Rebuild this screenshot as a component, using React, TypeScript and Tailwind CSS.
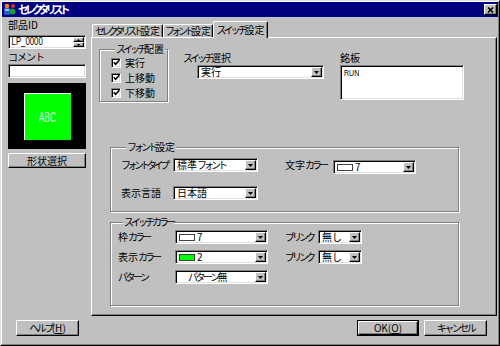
import React from "react";

const raised =
  "border border-t-white border-l-white border-r-black border-b-black shadow-[inset_-1px_-1px_0_#808080] bg-[#c0c0c0]";
const sunken =
  "border border-t-[#808080] border-l-[#808080] border-r-white border-b-white shadow-[inset_1px_1px_0_#000,inset_-1px_-1px_0_#dfdfdf]";
const group =
  "min-w-0 border border-[#808080] shadow-[inset_1px_1px_0_#fff,1px_1px_0_#fff]";
const legend = "bg-[#c0c0c0] px-px text-[10px] leading-[12px] whitespace-nowrap";
const label = "text-[10px] leading-[12px] whitespace-nowrap";

const J = ({ t, k = "tracking-[-3px]" }: { t: string; k?: string }) => (
  <>
    {t.split(/([\u30A0-\u30FF]+)/).map((s, i) =>
      /[\u30A0-\u30FF]/.test(s) ? (
        <span key={i} className={k}>
          {s}
        </span>
      ) : (
        s
      )
    )}
  </>
);

const Arrow = () => (
  <div className={`flex w-[11px] shrink-0 items-center justify-center ${raised}`}>
    <svg width="5" height="3" viewBox="0 0 5 3">
      <path d="M0 0h5L2.5 3z" fill="#000" />
    </svg>
  </div>
);

const Drop = ({ className = "", children }: { className?: string; children?: React.ReactNode }) => (
  <div className={`flex h-[14px] bg-white p-px ${sunken} ${className}`}>
    <div className="flex min-w-0 flex-1 items-center gap-[2px] whitespace-nowrap pl-[2px] text-[10px] leading-[10px]">
      {children}
    </div>
    <Arrow />
  </div>
);

const Swatch = ({ color }: { color: string }) => (
  <span className={`h-[7px] w-[16px] shrink-0 border border-[#404040] ${color}`} />
);

const Check = ({ text }: { text: string }) => (
  <div className="flex h-[15px] items-center gap-[4px]">
    <span className={`flex h-[10px] w-[10px] items-center justify-center bg-white ${sunken}`}>
      <svg width="7" height="7" viewBox="0 0 7 7">
        <path d="M0.8 3.2L2.6 5.2L6.3 1.2" stroke="#000" strokeWidth="1.6" fill="none" />
      </svg>
    </span>
    <span className={label}>{text}</span>
  </div>
);

const Tab = ({ className = "", children }: { className?: string; children: React.ReactNode }) => (
  <div
    className={`flex items-center justify-center rounded-t-[2px] border-t border-l border-r border-t-white border-l-white border-r-black shadow-[inset_-1px_0_0_#808080] bg-[#c0c0c0] text-[10px] leading-[10px] whitespace-nowrap ${className}`}
  >
    {children}
  </div>
);

const Btn = ({ className = "", children }: { className?: string; children: React.ReactNode }) => (
  <div className={`flex items-center justify-center text-[10px] leading-[10px] ${raised} ${className}`}>
    <span>{children}</span>
  </div>
);

export default function App() {
  return (
    <div className="h-[346px] w-[500px] overflow-hidden border border-t-[#dfdfdf] border-l-[#dfdfdf] border-r-black border-b-black bg-[#c0c0c0] font-['Noto_Sans_CJK_JP','Noto_Sans',sans-serif] text-black">
      <div className="flex h-full flex-col border border-t-white border-l-white border-r-[#808080] border-b-[#808080]">
        {/* title bar */}
        <div className="flex h-[15px] shrink-0 items-center bg-[#000080] pl-px">
          <svg width="13" height="13" viewBox="0 0 13 13">
            <rect x="1" y="5" width="6" height="7" fill="#2858c8" />
            <rect x="2" y="6" width="4" height="2" fill="#a0c0ff" />
            <circle cx="9.5" cy="8.5" r="3" fill="#18a040" />
            <circle cx="4" cy="3" r="2.3" fill="#f08818" />
            <circle cx="10" cy="3" r="2" fill="#e02828" />
          </svg>
          <span className="ml-[2px] text-[11px] font-bold leading-[11px] text-white">
            <J t="セレクタリスト" k="tracking-[-4px]" />
          </span>
          <div className={`ml-auto mr-[1px] flex h-[11px] w-[13px] items-center justify-center ${raised}`}>
            <svg width="7" height="6" viewBox="0 0 7 6">
              <path d="M1 0.5L6 5.5M6 0.5L1 5.5" stroke="#000" strokeWidth="1.6" />
            </svg>
          </div>
        </div>

        <div className="flex">
          {/* left column */}
          <div className="ml-[6px] flex w-[78px] flex-col">
            <span className={`mt-[2px] ${label}`}>部品ID</span>
            <div className={`mt-[4px] flex h-[14px] bg-white p-px ${sunken}`}>
              <span className="flex-1 origin-left scale-x-[0.78] pl-[2px] font-['Liberation_Sans',sans-serif] text-[10px] leading-[10px]">
                LP_0000
              </span>
              <div className="flex w-[11px] flex-col">
                <div className={`flex h-[5px] items-center justify-center ${raised}`}>
                  <svg width="3" height="2" viewBox="0 0 3 2">
                    <path d="M0 2h3L1.5 0z" fill="#000" />
                  </svg>
                </div>
                <div className={`flex h-[5px] items-center justify-center ${raised}`}>
                  <svg width="3" height="2" viewBox="0 0 3 2">
                    <path d="M0 0h3L1.5 2z" fill="#000" />
                  </svg>
                </div>
              </div>
            </div>
            <span className={`mt-[2px] ${label}`}>
              <J t="コメント" k="tracking-[-1px]" />
            </span>
            <div className={`mt-px h-[14px] bg-white ${sunken}`} />
            <div className="mt-[5px] flex h-[66px] items-center justify-center bg-black">
              <div className="flex h-[47px] w-[47px] items-center justify-center border-t border-l border-white bg-[#00ff00]">
                <span className="scale-x-[0.6] font-['Liberation_Sans',sans-serif] text-[14px] leading-[14px] text-[#d8ffd8]">
                  ABC
                </span>
              </div>
            </div>
            <Btn className="mt-[4px] h-[15px]">形状選択</Btn>
          </div>

          {/* tab control */}
          <div className="ml-[5px] mt-[4px] flex w-[406px] flex-col">
            <div className="flex h-[16px] items-end pl-px">
              <Tab className="h-[13px] w-[71px]">
                <J t="セレクタリスト設定" k="tracking-[-3.5px]" />
              </Tab>
              <Tab className="h-[13px] w-[50px]">
                <J t="フォント設定" k="tracking-[-3.5px]" />
              </Tab>
              <Tab className="relative z-10 -mb-px h-[17px] w-[55px]">
                <J t="スイッチ設定" k="tracking-[-3px]" />
              </Tab>
            </div>
            <div className="h-[279px] border border-t-white border-l-white border-r-black border-b-black shadow-[inset_-1px_-1px_0_#808080]">
              {/* row 1 */}
              <div className="flex items-start">
                <fieldset className={`ml-[7px] mt-[5px] w-[69px] shrink-0 pb-px pl-[11px] ${group}`}>
                  <legend className={`ml-[4px] ${legend}`}>
                    <J t="スイッチ配置" />
                  </legend>
                  <Check text="実行" />
                  <Check text="上移動" />
                  <Check text="下移動" />
                </fieldset>
                <div className="ml-[15px] mt-[14px] flex w-[141px] flex-col">
                  <span className={label}>
                    <J t="スイッチ選択" />
                  </span>
                  <Drop className="ml-[14px] mt-px w-[127px]">実行</Drop>
                </div>
                <div className="ml-[16px] mt-[14px] flex flex-col">
                  <span className={label}>銘板</span>
                  <div className={`mt-px h-[35px] w-[124px] bg-white pl-[3px] pt-[2px] ${sunken}`}>
                    <span className="block origin-left scale-x-[0.78] font-['Liberation_Sans',sans-serif] text-[9px] leading-[10px]">
                      RUN
                    </span>
                  </div>
                </div>
              </div>

              {/* font settings */}
              <fieldset className={`ml-[18px] mt-[39px] w-[349px] pb-[11px] pl-[10px] pt-[5px] ${group}`}>
                <legend className={`ml-[5px] ${legend}`}>
                  <J t="フォント設定" />
                </legend>
                <div className="flex items-start">
                  <span className={`mt-px w-[52px] ${label}`}>
                    <J t="フォントタイプ" k="tracking-[-3.5px]" />
                  </span>
                  <Drop className="w-[85px]">
                    <span>
                      標準<J t="フォント" />
                    </span>
                  </Drop>
                  <span className={`ml-[27px] mt-px w-[48px] ${label}`}>
                    <J t="文字カラー" />
                  </span>
                  <Drop className="mt-[2px] h-[13px] w-[83px]">
                    <Swatch color="bg-white" />
                    <span>7</span>
                  </Drop>
                </div>
                <div className="mt-[12px] flex items-start">
                  <span className={`mt-px w-[52px] ${label}`}>表示言語</span>
                  <Drop className="w-[85px]">日本語</Drop>
                </div>
              </fieldset>

              {/* switch colours */}
              <fieldset className={`ml-[18px] mt-[4px] w-[349px] pb-[21px] pl-[7px] pt-[2px] ${group}`}>
                <legend className={`ml-[5px] ${legend}`}>
                  <J t="スイッチカラー" />
                </legend>
                <div className="flex flex-col gap-[6px]">
                  <div className="flex items-center">
                    <span className={`w-[57px] ${label}`}>
                      <J t="枠カラー" />
                    </span>
                    <Drop className="w-[93px]">
                      <Swatch color="bg-white" />
                      <span>7</span>
                    </Drop>
                    <span className={`ml-[17px] w-[33px] ${label}`}>
                      <J t="ブリンク" />
                    </span>
                    <Drop className="w-[44px]">無し</Drop>
                  </div>
                  <div className="flex items-center">
                    <span className={`w-[57px] ${label}`}>
                      <J t="表示カラー" />
                    </span>
                    <Drop className="w-[93px]">
                      <Swatch color="bg-[#00ff00]" />
                      <span>2</span>
                    </Drop>
                    <span className={`ml-[17px] w-[33px] ${label}`}>
                      <J t="ブリンク" />
                    </span>
                    <Drop className="w-[44px]">無し</Drop>
                  </div>
                  <div className="flex items-center">
                    <span className={`w-[57px] ${label}`}>
                      <J t="パターン" k="tracking-[-2.5px]" />
                    </span>
                    <Drop className="w-[93px]">
                      <span className="pl-[9px]">
                        <J t="パターン無" k="tracking-[-2.5px]" />
                      </span>
                    </Drop>
                  </div>
                </div>
              </fieldset>
            </div>
          </div>
        </div>

        {/* bottom buttons */}
        <div className="mt-[4px] flex pl-[14px] pr-[11px]">
          <Btn className="h-[16px] w-[63px]">
            <J t="ヘルプ" k="tracking-[-2.5px]" />(<span className="underline">H</span>)
          </Btn>
          <div className="ml-auto flex h-[16px] w-[62px] border border-black">
            <Btn className="flex-1">
              OK(<span className="underline">O</span>)
            </Btn>
          </div>
          <Btn className="ml-[5px] h-[16px] w-[63px]">
            <J t="キャンセル" k="tracking-[-2.5px]" />
          </Btn>
        </div>
      </div>
    </div>
  );
}
